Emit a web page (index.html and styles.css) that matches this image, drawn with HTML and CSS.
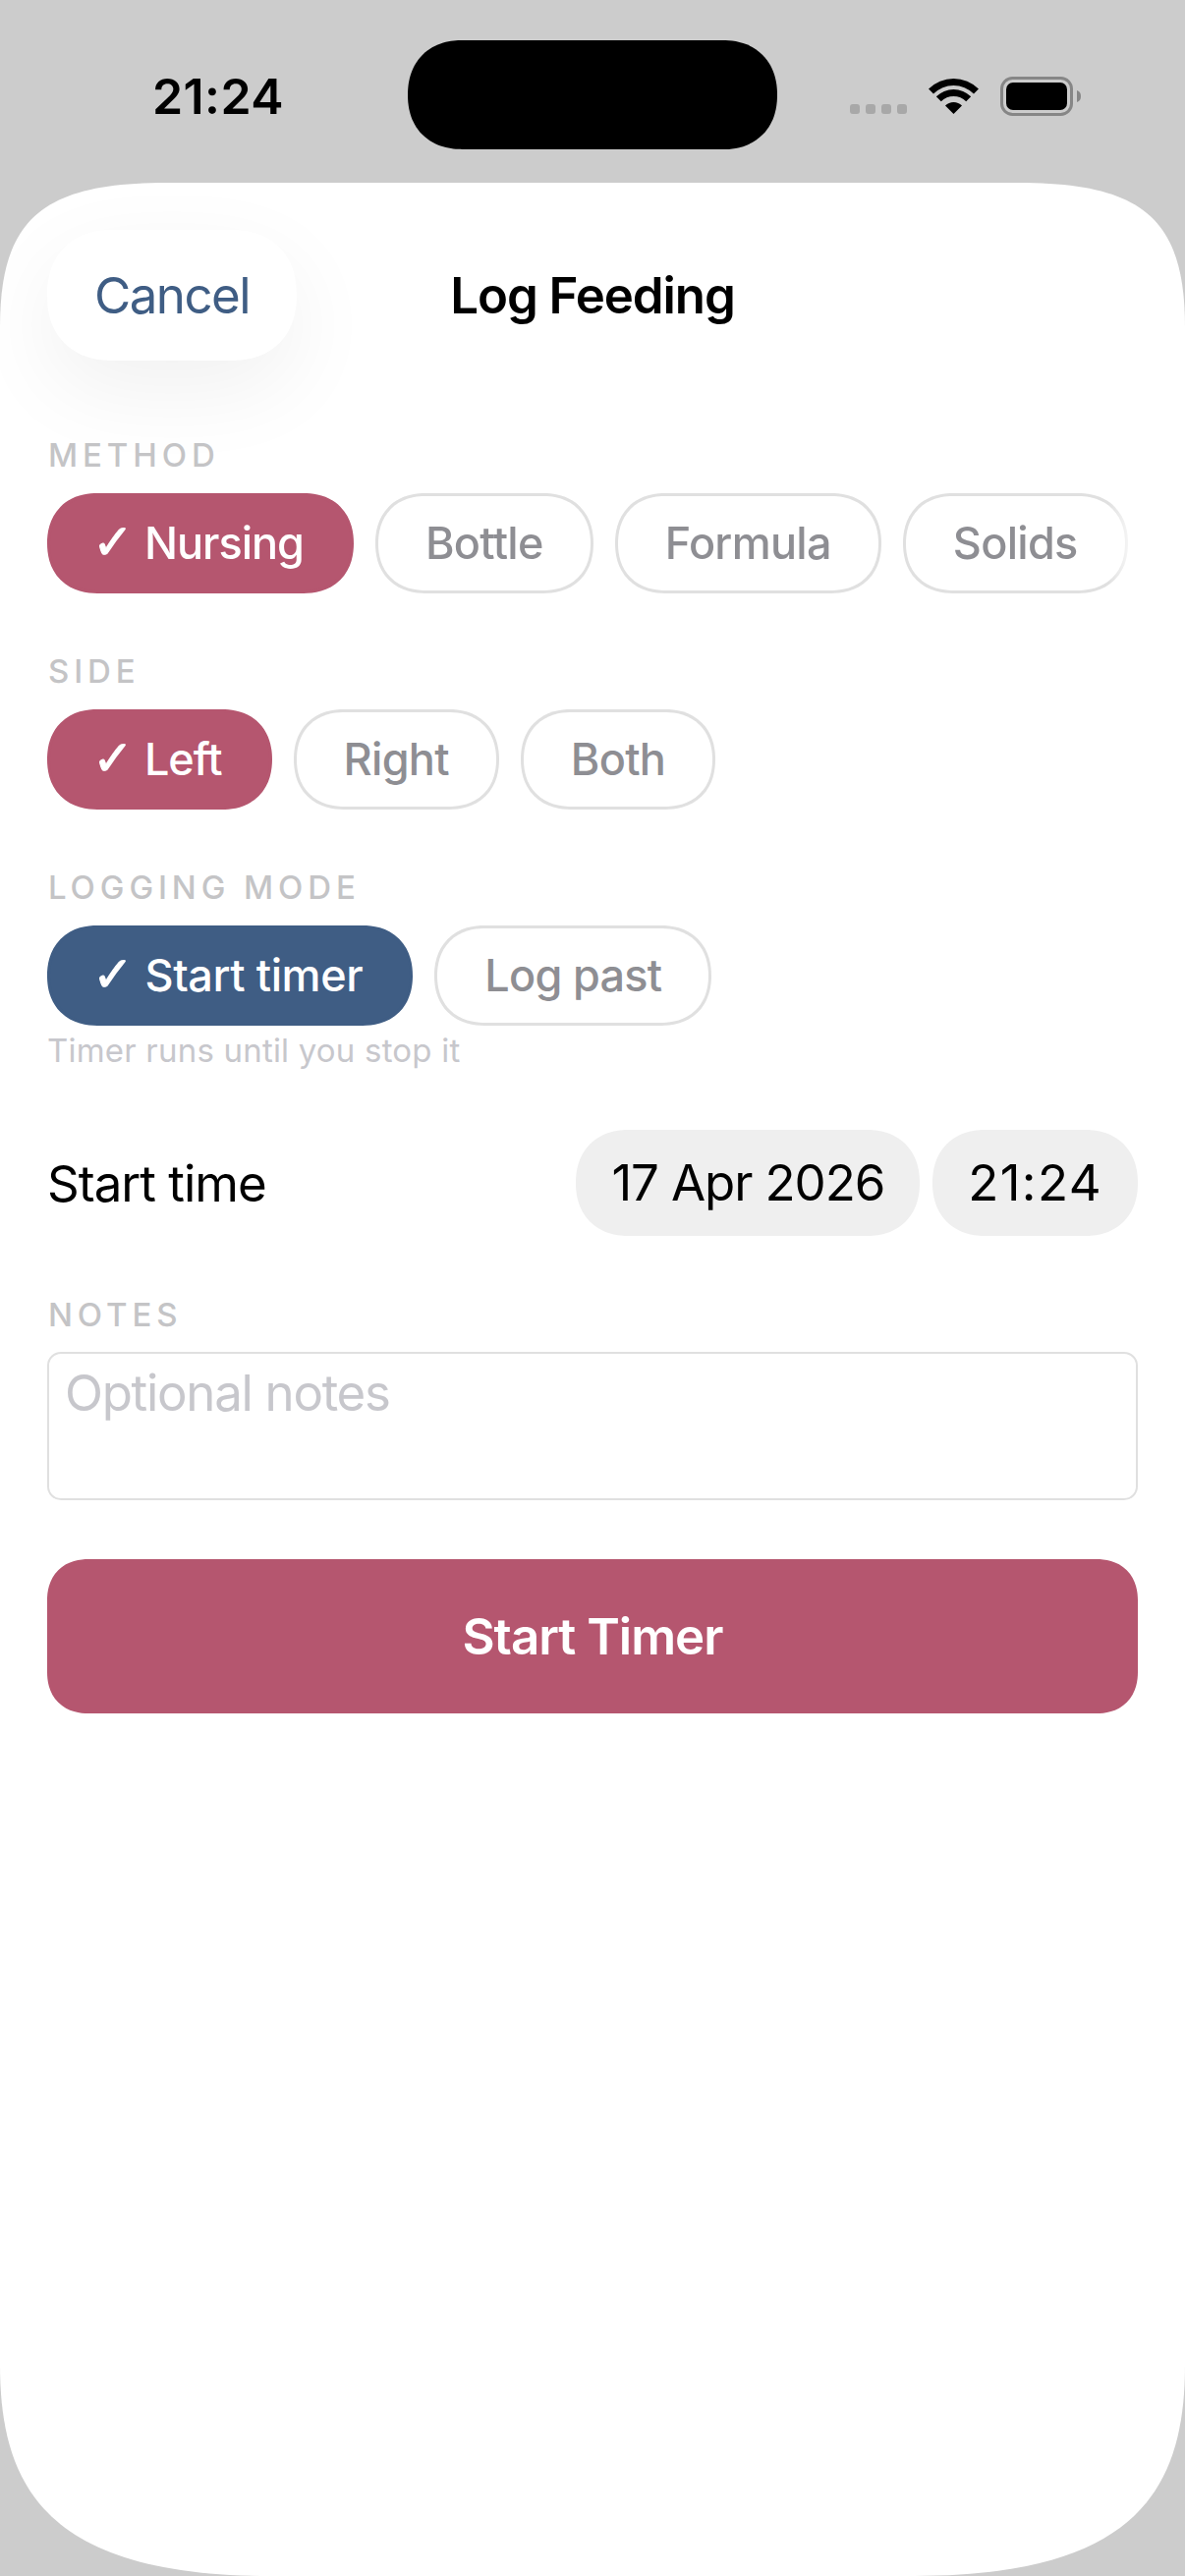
FILE: index.html
```html
<!DOCTYPE html>
<html lang="en">
<head>
    <meta charset="UTF-8">
    <title>Log Feeding</title>
    <link rel="stylesheet" href="styles.css">
</head>
<body>
    <div class="status-bar">
        <div class="clock">21:24</div>
        <div class="island"></div>
        <div class="status-icons">
            <div class="signal"><span></span><span></span><span></span><span></span></div>
            <svg class="wifi" width="51" height="37" viewBox="0 0 51 37">
                <path d="M.04 11.54A36 36 0 0 1 50.96 11.54L46 16.5A29 29 0 0 0 5 16.5Z"/>
                <path d="M7.82 19.32A25 25 0 0 1 43.18 19.32L38.23 24.27A18 18 0 0 0 12.77 24.27Z"/>
                <path d="M17.01 28.51A12 12 0 0 1 33.99 28.51L25.5 37Z"/>
            </svg>
            <svg class="battery" width="83" height="40" viewBox="0 0 83 40">
                <rect x="1.5" y="1.5" width="71" height="37" rx="11" fill="none" stroke="#868686" stroke-width="3"/>
                <rect x="6" y="6" width="62" height="28" rx="7"/>
                <path d="M78 14C81 15 82 17 82 20C82 23 81 25 78 26Z" fill="#868686"/>
            </svg>
        </div>
    </div>

    <div class="sheet">
        <div class="sheet-header">
            <div><button class="cancel">Cancel</button></div>
            <h1>Log Feeding</h1>
        </div>

        <div class="section">
            <div class="label">METHOD</div>
            <div class="chips chips-fade">
                <div class="chip chip-rose chip-tight"><span class="check">✓</span> Nursing</div>
                <div class="chip">Bottle</div>
                <div class="chip">Formula</div>
                <div class="chip">Solids</div>
            </div>
        </div>

        <div class="section">
            <div class="label">SIDE</div>
            <div class="chips">
                <div class="chip chip-rose chip-tight"><span class="check">✓</span> Left</div>
                <div class="chip">Right</div>
                <div class="chip">Both</div>
            </div>
        </div>

        <div class="section section-mode">
            <div class="label">LOGGING MODE</div>
            <div class="chips">
                <div class="chip chip-blue chip-wide"><span class="check">✓</span> Start timer</div>
                <div class="chip">Log past</div>
            </div>
            <div class="hint">Timer runs until you stop it</div>
        </div>

        <div class="time-row">
            <div class="time-label">Start time</div>
            <div class="time-pills">
                <div class="time-pill time-date">17 Apr 2026</div>
                <div class="time-pill time-clock">21:24</div>
            </div>
        </div>

        <div class="section section-notes">
            <div class="label">NOTES</div>
            <div class="notes">Optional notes</div>
        </div>

        <button class="submit">Start Timer</button>
    </div>
</body>
</html>
```

FILE: styles.css
```css
* {
    box-sizing: border-box;
}

body {
    margin: 0;
    height: 2622px;
    overflow: hidden;
    background: #ccc;
    color: #000;
    font-family: "Inter", "Liberation Sans", sans-serif;
}

.status-bar {
    display: grid;
    grid-template-columns: 415px 376px 1fr;
    height: 186px;
}

.clock {
    padding: 72px 0 0 155px;
    font-size: 50px;
    line-height: 52px;
    font-weight: 600;
    letter-spacing: 0.4px;
}

.island {
    margin-top: 41px;
    height: 111px;
    background: #000;
    border-radius: 56px;
    corner-shape: superellipse(1.15);
}

.status-icons {
    display: flex;
    align-items: flex-start;
    gap: 22px;
    padding: 78px 0 0 74px;
}

.signal {
    display: flex;
    gap: 6px;
    margin-top: 28px;
}

.signal span {
    width: 10px;
    height: 10px;
    border-radius: 3px;
    background: #a8a8a8;
}

.wifi {
    margin-top: 1px;
}

.sheet {
    height: 2436px;
    padding: 48px 48px 0;
    background: #fff;
    clip-path: path("M0 147C0 36 44 0 170 0H1036C1162 0 1206 36 1206 147V2221C1206 2348 1156 2436 930 2436H276C50 2436 0 2348 0 2221Z");
}

.sheet-header {
    display: grid;
    grid-template-columns: 1fr auto 1fr;
    align-items: center;
    margin-bottom: 76px;
}

.cancel {
    display: block;
    width: 254px;
    height: 133px;
    border: none;
    border-radius: 66px;
    corner-shape: superellipse(1.15);
    background: #fff;
    box-shadow: 0 30px 90px rgba(0, 0, 0, 0.06);
    color: #3f5d84;
    font-family: inherit;
    font-size: 51px;
    letter-spacing: -1.5px;
}

h1 {
    margin: 0;
    font-size: 51px;
    font-weight: 600;
    letter-spacing: -1.1px;
}

.section {
    display: flex;
    flex-direction: column;
    gap: 19px;
    margin-bottom: 59px;
}

.section-mode {
    gap: 0;
    margin-bottom: 61px;
}

.section-mode .chips {
    margin: 19px 0 5px;
}

.section-notes {
    gap: 18px;
    margin-bottom: 60px;
}

.label {
    padding-left: 1px;
    font-size: 33px;
    line-height: 40px;
    font-weight: 500;
    letter-spacing: 4.9px;
    color: #c4c4c6;
}

.chips {
    display: flex;
    gap: 22px;
}

.chips-fade {
    -webkit-mask-image: linear-gradient(to right, #000 calc(100% - 30px), transparent 100%);
    mask-image: linear-gradient(to right, #000 calc(100% - 30px), transparent 100%);
}

.chip {
    height: 102px;
    padding: 0 48px;
    border: 3px solid #e0e0e0;
    border-radius: 51px;
    corner-shape: superellipse(1.15);
    color: #8e8e93;
    font-size: 45px;
    line-height: 96px;
    font-weight: 500;
    letter-spacing: -0.7px;
    white-space: nowrap;
}

.chip-rose {
    border-color: #b5566f;
    background: #b5566f;
    color: #fff;
}

.chip-blue {
    border-color: #3f5d84;
    background: #3f5d84;
    color: #fff;
}

.chip-tight {
    letter-spacing: -1px;
}

.chip-wide {
    letter-spacing: -0.4px;
}

.check {
    margin-left: -5px;
    font-family: "DejaVu Sans", sans-serif;
    font-size: 50px;
    line-height: 0;
    letter-spacing: 0;
    -webkit-text-stroke: 1px currentColor;
}

.hint {
    font-size: 33px;
    line-height: 40px;
    letter-spacing: 0.2px;
    color: #c7c7cc;
}

.time-row {
    display: flex;
    justify-content: space-between;
    align-items: center;
    margin-bottom: 60px;
}

.time-label {
    font-size: 51px;
    letter-spacing: -1px;
}

.time-pills {
    display: flex;
    gap: 13px;
}

.time-pill {
    height: 108px;
    padding: 0 36px;
    border-radius: 54px;
    corner-shape: superellipse(1.15);
    background: #efefef;
    font-size: 51px;
    line-height: 108px;
}

.time-date {
    letter-spacing: -1.1px;
}

.time-clock {
    letter-spacing: 1.4px;
}

.notes {
    height: 151px;
    padding: 10px 16px;
    border: 2px solid #e0e0e0;
    border-radius: 14px;
    color: #c7c7cc;
    font-size: 51px;
    line-height: 60px;
    letter-spacing: -1.3px;
}

.submit {
    display: block;
    width: 100%;
    height: 157px;
    border: none;
    border-radius: 42px;
    corner-shape: superellipse(1.15);
    background: #b5566f;
    color: #fff;
    font-family: inherit;
    font-size: 51px;
    font-weight: 600;
    letter-spacing: -1px;
}
```
